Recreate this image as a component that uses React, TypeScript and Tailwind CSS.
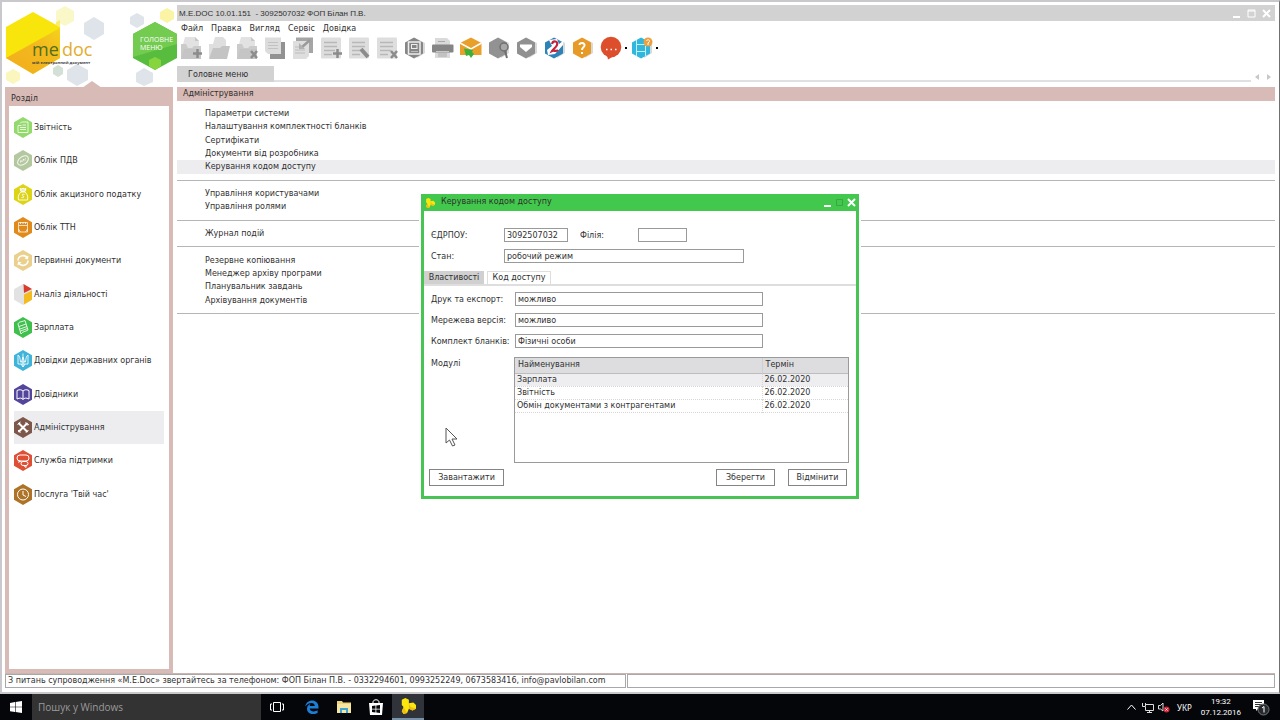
import { useState } from 'react'
import type { ReactNode } from 'react'

const HEX = 'M9 0L18 5.2V15.8L9 21L0 15.8V5.2Z'

interface HexProps {
  fill: string
  children?: ReactNode
}

function SectionHex({ fill, children }: HexProps) {
  return (
    <svg viewBox="0 0 18 21" className="h-[21px] w-[18px] shrink-0" fill="none" stroke="#fff" strokeWidth="1">
      <path d={HEX} fill={fill} stroke="none" />
      {children}
    </svg>
  )
}

const sections = [
  {
    label: 'Звітність',
    fill: '#93d96b',
    art: (
      <>
        <path d="M6 6.5L7.5 5H14V15.500H4V8.500" strokeOpacity=".8" />
        <path d="M4 8.500H7.500M6 10.500H12M6 12.500H12M8.500 8H12" strokeOpacity=".8" />
      </>
    ),
  },
  {
    label: 'Облік ПДВ',
    fill: '#b4c8a0',
    art: (
      <>
        <ellipse cx="9" cy="10.500" rx="6" ry="3.800" transform="rotate(-35 9 10.500)" strokeOpacity=".85" />
        <path d="M6.500 12.500L7 10.500L8.500 12M9 11L9.500 9L11 10.500M11 8.500L12 9" strokeOpacity=".85" />
      </>
    ),
  },
  {
    label: 'Облік акцизного податку',
    fill: '#dcd414',
    art: (
      <>
        <path d="M7 7.500L6 4.500L8 5L9 4L10 5L12 4.500L11 7.500Z" fill="#fff" fillOpacity=".6" />
        <path d="M7 8H11C14 11 14 13 13.500 16H4.500C4 13 4 11 7 8Z" strokeOpacity=".9" />
        <path d="M10.500 10.500C8 9.500 7.500 11.500 9 12S10 14 7.500 13.500" strokeOpacity=".9" />
      </>
    ),
  },
  {
    label: 'Облік ТТН',
    fill: '#e08a1c',
    art: (
      <>
        <path d="M4.500 8.500V5.500H13.500V8.500ZM4.500 8.500V15H13.500V8.500" strokeOpacity=".7" />
        <path d="M6.500 5V7M9 5V7M11.500 5V7M4.500 12L6.500 15M13.500 12L11.500 15" strokeOpacity=".7" />
      </>
    ),
  },
  {
    label: 'Первинні документи',
    fill: '#ebcf8c',
    art: (
      <>
        <path d="M4 10.500A5 5 0 0 1 13.500 8.500M14 10.500A5 5 0 0 1 4.500 12.500" strokeWidth="1.500" />
        <path d="M14.500 5.500L14 9.500L10.500 8.500ZM3.500 15.500L4 11.500L7.500 12.500Z" fill="#fff" stroke="none" />
      </>
    ),
  },
  {
    label: 'Аналіз діяльності',
    fill: '#e2e2e2',
    art: (
      <>
        <path d="M9.500 0L18 5L10 9Z" fill="#d83a30" stroke="none" />
        <path d="M10 10.500L18 6.500V15.800L10 20.500Z" fill="#f4bb20" stroke="none" />
      </>
    ),
  },
  {
    label: 'Зарплата',
    fill: '#3fc04c',
    art: (
      <path
        d="M4 7C5 4.500 6 5.500 11 3.500L14 13C11 15 9 14 7 17ZM5 9.500L12 7M6 12L13 9.500M6.500 14L13.500 11.500"
        strokeOpacity=".85"
      />
    ),
  },
  {
    label: 'Довідки державних органів',
    fill: '#3fb4da',
    art: (
      <path
        d="M4 5V14H14V5C12 6 12 9 11.500 12H6.500C6 9 6 6 4 5ZM9 3.500V17M7.500 12L9 7L10.500 12M7 14L9 17L11 14"
        strokeOpacity=".85"
      />
    ),
  },
  {
    label: 'Довідники',
    fill: '#54459c',
    art: <path d="M3 6.500C6 5 8 6 9 7C10 6 12 5 15 6.500V15C12 13.500 10 14 9 15.500C8 14 6 13.500 3 15ZM9 7V15.500" />,
  },
  {
    label: 'Адміністрування',
    fill: '#7d5749',
    art: (
      <>
        <path d="M4.500 6L13.500 15M13.500 6L4.500 15" strokeWidth="2" />
        <path d="M3.500 7.500L6.500 5M11.500 5.500L13 8L15 7.500M4 13L6.500 15.500M12 15.500L14.500 13" />
      </>
    ),
  },
  {
    label: 'Служба підтримки',
    fill: '#df4f36',
    art: (
      <>
        <rect x="3" y="5" width="12" height="6" rx="3" />
        <path d="M5 10.500L4 13L8 11" fill="#fff" stroke="none" />
        <rect x="7" y="11.500" width="7" height="4" rx="2" />
        <path d="M9 15L12 17.500L12 15" />
      </>
    ),
  },
  {
    label: "Послуга 'Твій час'",
    fill: '#ad7428',
    art: (
      <>
        <circle cx="9" cy="10.500" r="5.500" />
        <path d="M9 7V11L12 12.500" />
      </>
    ),
  },
]

const menu = ['Файл', 'Правка', 'Вигляд', 'Сервіс', 'Довідка']

// null is a separator line
const adminItems: (string | null)[] = [
  'Параметри системи',
  'Налаштування комплектності бланків',
  'Сертифікати',
  'Документи від розробника',
  'Керування кодом доступу',
  null,
  'Управління користувачами',
  'Управління ролями',
  null,
  'Журнал подій',
  null,
  'Резервне копіювання',
  'Менеджер архіву програми',
  'Планувальник завдань',
  'Архівування документів',
  null,
]

const modules = [
  { name: 'Зарплата', date: '26.02.2020' },
  { name: 'Звітність', date: '26.02.2020' },
  { name: 'Обмін документами з контрагентами', date: '26.02.2020' },
]

const folder = (
  <>
    <path d="M3 12L6 1H16L20 5V12Z" fill="#e2e2e2" />
    <path d="M16 1V5H20Z" fill="#c6c6c6" />
    <path d="M2 23V8H7L9 12H13L15 10H22V23Z" fill="#cbcbcb" />
    <path d="M2 23L5 13H22V23Z" fill="#c5c5c5" />
  </>
)

const sheet = (
  <>
    <rect x="2" y="1.500" width="20" height="21" rx="1" fill="#dedede" />
    <path d="M5 6.500H18M5 10.500H18M5 14.500H16M5 18.500H13" stroke="#b8b8b8" strokeWidth="1.500" />
  </>
)

const plus = <path d="M18.500 13V22M14 17.500H23" stroke="#8c8c8c" strokeWidth="2.500" />
const cross = <path d="M16 15L22 22M22 15L16 22" stroke="#8c8c8c" strokeWidth="2.500" />

function toolHex(fill: string) {
  return (
    <>
      <path d="M12 2L22 7V17L14 22Z" fill="#d9d9d9" />
      <path d="M11 1.500L20 6.500V17.500L11 22.500L2 17.500V6.500Z" fill={fill} />
    </>
  )
}

const tools = [
  { title: 'Створити', art: <>{folder}{plus}</> },
  {
    title: 'Відкрити',
    art: (
      <>
        <path d="M2 22V8H6L8 1H16L19 4V12L5 22Z" fill="#dedede" />
        <path d="M2 23L6 12H13L15 10H23L20 23Z" fill="#c4c4c4" />
      </>
    ),
  },
  { title: 'Видалити', art: <>{folder}{cross}</> },
  {
    title: 'Копіювати',
    art: (
      <>
        <path d="M7 6H22V23H7Z" fill="#929292" />
        <path d="M2 1.500H18V18H5L2 15Z" fill="#dcdcdc" />
        <path d="M5 6.500H15M5 9.500H15M5 12.500H15" stroke="#c2c2c2" />
      </>
    ),
  },
  {
    title: 'Вставити',
    art: (
      <>
        <path d="M5 1.500H22V17H5Z" fill="#a5a5a5" />
        <path d="M2 5H18V20L15 23H2Z" fill="#dedede" />
        <path d="M4 11H12M4 14H14M4 17H14" stroke="#bcbcbc" />
        <path d="M19 4L10 12" fill="none" stroke="#9a9a9a" strokeWidth="2.500" />
        <path d="M8 7V13H14Z" fill="#b0b0b0" />
      </>
    ),
  },
  { title: 'Додати рядок', art: <>{sheet}{plus}</> },
  {
    title: 'Редагувати рядок',
    art: <>{sheet}<path d="M14 13L21 21" stroke="#8c8c8c" strokeWidth="4" /></>,
  },
  { title: 'Видалити рядок', art: <>{sheet}{cross}</> },
  {
    title: 'Зберегти',
    art: (
      <>
        {toolHex('#868686')}
        <rect x="5.500" y="6" width="11.500" height="12" fill="none" stroke="#eee" strokeWidth="1.500" />
        <rect x="8.500" y="8.500" width="5.500" height="4" fill="none" stroke="#eee" />
        <path d="M8 15.500H15" stroke="#bbb" />
      </>
    ),
  },
  {
    title: 'Друк',
    art: (
      <>
        <path d="M4 2H16L19 5V22H4Z" fill="#dadada" />
        <path d="M7 5.500H14M7 18H16M7 20H16" stroke="#aaa" />
        <rect x="1" y="8.500" width="21.500" height="8" rx="1" fill="#858585" />
        <path d="M5 15.500H18" stroke="#c8c8c8" />
      </>
    ),
  },
  {
    title: 'Надіслати пошту',
    art: (
      <>
        <path d="M1 7L12 1.500L22.500 7V19H1Z" fill="#e8a02a" />
        <path d="M1 7L12 13L22.500 7" fill="none" stroke="#fff" strokeWidth="1.500" />
        <path d="M5 12.500L14 14L13 16L15 18L12 22L10 19L7 20Z" fill="#3bb13b" />
      </>
    ),
  },
  {
    title: 'Пошук',
    art: (
      <>
        {toolHex('#929292')}
        <circle cx="17" cy="11" r="4" fill="#a8a8a8" stroke="#707070" strokeWidth="1.500" />
        <path d="M18 15L20 22" stroke="#707070" strokeWidth="2" />
      </>
    ),
  },
  {
    title: 'Фільтр',
    art: <>{toolHex('#909090')}<path d="M5 8.500H17V11L11 16L5 11Z" fill="#fff" /></>,
  },
  {
    title: 'Перевірка',
    art: (
      <>
        {toolHex('#2b83b8')}
        <path d="M6 4L14 3L16 8L20 5V9L12 18L5 19L4 14L9 10Z" fill="#fff" />
        <path d="M9 8C10 4 15.500 5 14 9C13 12 10 13 9 15C11 14 13 16 15 14" fill="none" stroke="#c4213c" strokeWidth="2.200" />
      </>
    ),
  },
  {
    title: 'Довідка',
    art: (
      <>
        {toolHex('#e79a26')}
        <path d="M8.500 9C8.500 6 14 6.500 13.500 9.500C13 11.500 11 11.500 11 14M11 16V18" fill="none" stroke="#fff" strokeWidth="2" />
      </>
    ),
  },
  {
    title: 'Повідомлення',
    dot: true,
    art: (
      <>
        <circle cx="12" cy="11" r="10.300" fill="#dd4e2c" />
        <path d="M8 19L9 23.500L15 20Z" fill="#dd4e2c" />
        <path d="M7 13.500H8.500M11.500 13.500H13M16 13.500H17.500" stroke="#fff" strokeWidth="1.500" />
      </>
    ),
  },
  {
    title: 'Відео',
    dot: true,
    art: (
      <>
        {toolHex('#2fb7dc')}
        <path d="M6.500 4V20M15.500 4V20M7 8.500H15M7 15.500H15" stroke="#c5eef8" />
        <circle cx="18" cy="6" r="4.500" fill="#eda040" />
        <path d="M16.500 5C17 3 20 3.500 19.500 5.500L18 7V9" fill="none" stroke="#fff" />
      </>
    ),
  },
]

function MedocMark({ className }: { className: string }) {
  return (
    <svg viewBox="0 0 18 18" className={className}>
      <path d="M2 2L6 0L10 2V6L15 5L18 8V12L14 14L10 12L8 17L4 18L2 15L4 10L2 8Z" fill="#fbe60d" />
      <path d="M10 6V12L14 14L18 12L12 10ZM4 10L2 15L4 18L8 17Z" fill="#f0bd12" />
    </svg>
  )
}

function Brand() {
  return (
    <div className="relative h-[82px] w-[172px]">
      <svg viewBox="5 5 172 82" className="block h-[82px] w-[172px] overflow-visible">
        <defs>
          <linearGradient id="amber" x1="0" y1="1" x2="1" y2="0">
            <stop offset="0" stopColor="#f2ac1c" />
            <stop offset=".6" stopColor="#f3b91e" />
            <stop offset="1" stopColor="#f5d21c" />
          </linearGradient>
        </defs>
        <path d="M33 12L60 27V58L33 74L6 58V27Z" fill="#f8e50c" />
        <path d="M60 28V58L33 74L6 58Z" fill="url(#amber)" />
        <path d="M65 6L74 11V21L65 26L56 21V11Z" fill="#faf7c8" />
        <path d="M60 27V20L56 22V25Z" fill="#f9ee6c" />
        <path d="M94 17L104 23V34L94 40L84 34V23Z" fill="#dfe3ea" />
        <path d="M13 69L20 73V80L13 84L6 80V73Z" fill="#faf6bd" />
        <path d="M58 65L63 68V74L58 77L53 74V68Z" fill="#d3e0d5" />
        <path d="M77 64L88 70V80L77 86L67 80V70Z" fill="#dfe3ea" />
        <path d="M137 13L144 17V24L137 28L130 24V17Z" fill="#dfe3ea" />
        <path d="M167 8L174 12V19L167 23L160 19V12Z" fill="#faf4a4" />
        <path d="M144 68L153 73V82L144 86L136 82V73Z" fill="#dfe3ea" />
        <path d="M155 22L177 34V58L155 70L133 58V34Z" fill="#58bd3f" />
        <path d="M155 22L177 34V44L133 57V34Z" fill="#73cb50" />
        <path d="M155 57L161 60V66L155 70L149 66V60Z" fill="#86d53c" />
        <path d="M92 81L102 88H82Z" fill="#d8bab6" />
        <text x="32" y="56" fontSize="18" fontFamily="Open Sans" fill="#4f6f1c">me</text>
        <text x="62" y="56" fontSize="18" fontFamily="Open Sans" fill="#e3ad2c">doc</text>
        <text x="32" y="64" fontSize="4" fontFamily="Open Sans" fontWeight="700" fill="#444">мій електронний документ</text>
      </svg>
      <button className="absolute top-[17px] right-0 h-12 w-[45px] pb-1 pl-2 text-left font-['Open_Sans',sans-serif] text-[7px] leading-[8px] text-white">
        ГОЛОВНЕ МЕНЮ
      </button>
    </div>
  )
}

function Sidebar() {
  const [active, setActive] = useState(9)

  return (
    <aside className="flex w-[172px] shrink-0 flex-col">
      <Brand />
      <div className="flex w-[168px] flex-1 flex-col bg-[#d8bab6] px-1 pb-1">
        <h2 className="px-[2px] pt-[5px] leading-[14px]">Розділ</h2>
        <nav className="flex-1 bg-white px-[5px] pt-[5px]">
          <ul className="grid h-[400px] grid-rows-12">
            {sections.map((s, i) => (
              <li key={s.label} className={i === active ? 'bg-[#ededf0]' : ''}>
                <button onClick={() => setActive(i)} className="flex h-full w-full items-center gap-[2px] text-left whitespace-nowrap">
                  <SectionHex fill={s.fill}>{s.art}</SectionHex>
                  {s.label}
                </button>
              </li>
            ))}
          </ul>
        </nav>
      </div>
    </aside>
  )
}

function Toolbar() {
  return (
    <div className="flex h-[26px] items-center">
      {tools.map((t) => (
        <div key={t.title} className="flex items-center">
          <button title={t.title} className="flex w-7 justify-center">
            <svg viewBox="0 0 24 24" className="h-6 w-6">{t.art}</svg>
          </button>
          {t.dot && <span className="mr-px size-[2px] bg-black" />}
        </div>
      ))}
    </div>
  )
}

function Workspace() {
  return (
    <main className="flex min-w-0 flex-1 flex-col">
      <header className="flex h-4 items-center justify-between bg-[#d2d2d2] pr-1 pl-[2px]">
        <h1 className="font-['Liberation_Sans',sans-serif] whitespace-pre">
          M.E.DOC 10.01.151  - 3092507032 ФОП Білан П.В.
        </h1>
        <div className="flex gap-[6px] text-white">
          <button title="Згорнути">
            <svg viewBox="0 0 9 9" className="size-[9px]"><path d="M1 8H8" stroke="currentColor" strokeWidth="2" /></svg>
          </button>
          <button title="Розгорнути">
            <svg viewBox="0 0 9 9" className="size-[9px]"><path d="M1 1H8V8H1ZM1 2H8" fill="none" stroke="currentColor" /></svg>
          </button>
          <button title="Закрити">
            <svg viewBox="0 0 9 9" className="size-[9px]"><path d="M1 1L8 8M8 1L1 8" stroke="currentColor" strokeWidth="2" /></svg>
          </button>
        </div>
      </header>
      <nav className="flex h-[14px] items-center gap-2 px-1">
        {menu.map((m) => (
          <button key={m}>{m}</button>
        ))}
      </nav>
      <Toolbar />
      <div className="mt-[5px] flex h-4 items-end">
        <button className="h-full w-[97px] bg-[#d2d2d2] pt-px pl-[11px] text-left">Головне меню</button>
        <div className="h-[2px] flex-1 bg-[#dfe0e2]" />
        <div className="flex h-full w-6 items-center justify-around pt-[5px] text-[#c8c8c8]">
          <button title="Назад">
            <svg viewBox="0 0 4 6" className="h-[6px] w-1"><path d="M4 0V6L0 3Z" fill="currentColor" /></svg>
          </button>
          <button title="Вперед">
            <svg viewBox="0 0 4 6" className="h-[6px] w-1"><path d="M0 0V6L4 3Z" fill="currentColor" /></svg>
          </button>
        </div>
      </div>
      <h2 className="mt-[5px] h-[14px] bg-[#d8bab6] pl-[6px] leading-[14px]">Адміністрування</h2>
      <ul className="mt-[6px] grid h-[213px] grid-rows-16">
        {adminItems.map((item, i) =>
          item === null ? (
            <li key={i} className="flex items-center"><hr className="w-full border-[#b5b5b5]" /></li>
          ) : (
            <li key={i} className={`flex items-center pl-7 ${i === 4 ? 'bg-[#ededf0]' : ''}`}>
              <a href="#">{item}</a>
            </li>
          )
        )}
      </ul>
    </main>
  )
}

const inputStyle = 'h-[14px] border border-[#9a9a9a] bg-white px-[2px] text-[8px] outline-none'

const props = [
  { id: 'print', label: 'Друк та експорт:', value: 'можливо' },
  { id: 'network', label: 'Мережева версія:', value: 'можливо' },
  { id: 'forms', label: 'Комплект бланків:', value: 'Фізичні особи' },
]

function AccessDialog() {
  return (
    <section className="absolute inset-x-0 top-[194px] mx-auto w-[438px] border-3 border-t-0 border-[#48c455] bg-white ring-2 ring-white">
      <header className="flex h-[17px] items-center bg-[#42c84c] pl-[1px]">
        <MedocMark className="h-[10px] w-[10px]" />
        <h2 className="flex-1 pb-[2px] pl-[6px]">Керування кодом доступу</h2>
        <div className="flex items-center gap-[3px]">
          <button title="Згорнути">
            <svg viewBox="0 0 9 9" className="size-[9px]"><path d="M1 8H8" stroke="#fff" strokeWidth="2" /></svg>
          </button>
          <button title="Розгорнути" disabled>
            <svg viewBox="0 0 9 9" className="size-[9px]"><path d="M1.500 1.500H7.500V7.500H1.500Z" fill="none" stroke="#3aa544" /></svg>
          </button>
          <button title="Закрити">
            <svg viewBox="0 0 9 9" className="size-[9px]"><path d="M1 1L8 8M8 1L1 8" stroke="#fff" strokeWidth="2" /></svg>
          </button>
        </div>
      </header>

      <div className="flex flex-col gap-[7px] px-[7px] pt-[17px]">
        <div className="flex items-center">
          <label htmlFor="edrpou" className="w-[73px]">ЄДРПОУ:</label>
          <input id="edrpou" defaultValue="3092507032" className={`${inputStyle} w-16`} />
          <label htmlFor="branch" className="w-[70px] pl-3">Філія:</label>
          <input id="branch" className={`${inputStyle} w-[49px]`} />
        </div>
        <div className="flex items-center">
          <label htmlFor="state" className="w-[73px]">Стан:</label>
          <input id="state" defaultValue="робочий режим" className={`${inputStyle} w-[240px]`} />
        </div>
      </div>

      <div className="mt-2 flex items-end gap-[3px] border-b-2 border-[#dedede]">
        <button className="h-[13px] w-[60px] bg-[#d0d0d0] pt-px leading-3">Властивості</button>
        <button className="h-[13px] w-16 border border-b-0 border-[#dedede] leading-3">Код доступу</button>
      </div>

      <div className="flex flex-col gap-[7px] px-[7px] pt-[6px]">
        {props.map((p) => (
          <div key={p.id} className="flex items-center">
            <label htmlFor={p.id} className="w-[84px] whitespace-nowrap">{p.label}</label>
            <input id={p.id} defaultValue={p.value} className={`${inputStyle} w-[248px]`} />
          </div>
        ))}
        <div className="flex pt-[2px]">
          <span className="w-[84px]">Модулі</span>
          <div className="h-[106px] w-[335px] shrink-0 border border-[#9a9a9a]">
            <table className="w-full table-fixed border-collapse text-left leading-3">
              <thead>
                <tr className="h-[15px] border-b border-[#bdbdbd] bg-[#dddddf]">
                  <th className="border-r border-[#cfcfcf] pl-[3px] font-normal">Найменування</th>
                  <th className="w-[86px] pl-[3px] font-normal">Термін</th>
                </tr>
              </thead>
              <tbody>
                {modules.map((m, i) => (
                  <tr key={m.name} className={`h-[13px] border-b border-dotted border-[#d6d6d6] ${i === 0 ? 'bg-[#eeeef1]' : ''}`}>
                    <td className="border-r border-dotted border-[#d6d6d6] pl-[2px]">{m.name}</td>
                    <td className="pl-[2px]">{m.date}</td>
                  </tr>
                ))}
              </tbody>
            </table>
          </div>
        </div>
      </div>

      <footer className="flex gap-[13px] px-[5px] pt-[6px] pb-[10px]">
        <button className="mr-auto h-[17px] w-[75px] border border-[#858585]">Завантажити</button>
        <button className="h-[17px] w-[59px] border border-[#858585]">Зберегти</button>
        <button className="mr-1 h-[17px] w-[59px] border border-[#858585]">Відмінити</button>
      </footer>
    </section>
  )
}

function Taskbar() {
  return (
    <footer className="flex h-[26px] shrink-0 items-center bg-[#04060a] font-['Open_Sans',sans-serif] text-white">
      <button title="Пуск" className="flex w-8 justify-center">
        <svg viewBox="0 0 12 12" className="size-3" fill="#fff">
          <path d="M0 2L5 1V5.700H0ZM5.600 .9L12 0V5.700H5.600ZM0 6.300H5V11L0 10.200ZM5.600 6.300H12V12L5.600 11.100Z" />
        </svg>
      </button>
      <input
        aria-label="Пошук у Windows"
        placeholder="Пошук у Windows"
        className="h-full w-[229px] bg-[#333333] px-[6px] text-[10px] outline-none placeholder:text-[#9a9a9a]"
      />
      <button title="Подання завдань" className="flex w-8 justify-center">
        <svg viewBox="0 0 14 12" className="h-3 w-[14px]" fill="none" stroke="#fff">
          <path d="M3.500 1.500H10.500V10.500H3.500ZM2 3H.5V9H2M12 3H13.500V9H12" />
        </svg>
      </button>
      <button title="Edge" className="ml-[3px] flex w-8 justify-center">
        <svg viewBox="0 0 14 14" className="size-[14px]">
          <path d="M.3 6.500C1-1.500 13.500-2 13.500 7V8.500H4.700C5 12 10 12 12.600 10.300V13C8 15.500 1.500 14 2 8.500C2 6 4 4.500 5.500 4C4.800 5 4.700 6 4.700 6H9.800C9.800 2 3.500 2 .3 6.500Z" fill="#1b7fd6" />
        </svg>
      </button>
      <button title="Провідник" className="flex w-8 justify-center">
        <svg viewBox="0 0 16 14" className="h-[14px] w-4">
          <path d="M1 1H6L7 2.500H15V13H1Z" fill="#efd37a" />
          <path d="M1 4H15V13H1Z" fill="#f8e6a0" />
          <path d="M4 13V8H12V13H10V10H6V13Z" fill="#3da6d6" />
        </svg>
      </button>
      <button title="Магазин" className="flex w-8 justify-center">
        <svg viewBox="0 0 16 16" className="size-4">
          <path d="M1 4H15L14 16H2Z" fill="#fff" />
          <path d="M5 6V3C5 0 11 0 11 3V6" fill="none" stroke="#fff" />
          <path d="M4 7L7.500 6.500V9.700H4ZM8.300 6.400L12 6V9.700H8.300ZM4 10.400H7.500V13.500L4 13ZM8.300 10.400H12V14L8.300 13.600Z" fill="#04060a" />
        </svg>
      </button>
      <button title="M.E.Doc" className="flex h-full w-8 items-center justify-center border-b-2 border-[#7691a8] bg-[#30343a]">
        <MedocMark className="size-4" />
      </button>

      <div className="ml-auto flex items-center text-[8px] leading-[11px]">
        <svg viewBox="0 0 9 6" className="h-[6px] w-[9px]" fill="none" stroke="#fff"><path d="M.5 5.500L4.500 1L8.500 5.500" /></svg>
        <svg viewBox="0 0 12 11" className="ml-[6px] h-[11px] w-3" fill="none" stroke="#ddd">
          <path d="M4 2.500H11.500V8.500H3.500V5M.5 1V4.500H3.500V1M5 10.500H10M7.500 8.500V10" />
        </svg>
        <svg viewBox="0 0 12 11" className="ml-1 h-[11px] w-3" fill="none" stroke="#ddd">
          <path d="M5 1V9L2.500 7H.5V3.500H2.500Z" />
          <circle cx="8.500" cy="7.500" r="3" fill="#d4263a" stroke="none" />
          <path d="M7.500 6.500L9.500 8.500M9.500 6.500L7.500 8.500" stroke="#fff" />
        </svg>
        <button className="ml-[7px] font-['Noto_Sans',sans-serif]">УКР</button>
        <time className="ml-[9px] text-center font-['Roboto',sans-serif]">19:32<br />07.12.2016</time>
        <button title="Центр сповіщень" className="mr-[10px] ml-[11px]">
          <svg viewBox="0 0 18 18" className="h-[18px] w-[18px]">
            <path d="M1 2H12V11H6L4 13V11H1Z" fill="#fff" />
            <path d="M3 4.500H10M3 6.500H10M3 8.500H8" stroke="#333" />
            <circle cx="11.500" cy="11.500" r="5.500" fill="#26292e" stroke="#777" />
            <path d="M10 10L12 8.500V14.500" fill="none" stroke="#fff" />
          </svg>
        </button>
      </div>
    </footer>
  )
}

export default function App() {
  return (
    <div className="relative flex min-h-screen flex-col font-['DejaVu_Sans',sans-serif] text-[8px] leading-[13px] text-[#303030]">
      <div className="flex flex-1 flex-col border-t-2 border-r border-b-2 border-l-2 border-[#c9c9cd] border-r-[#707070] bg-white pt-[3px] pr-1 pb-1 pl-[3px]">
        <div className="flex flex-1">
          <Sidebar />
          <Workspace />
        </div>
        <div className="flex h-[15px] gap-px border-t border-[#c9b5b2]">
          <p className="min-w-[621px] border border-[#a8a8a8] px-[2px] leading-3 whitespace-nowrap">
            З питань супроводження «M.E.Doc» звертайтесь за телефоном: ФОП Білан П.В. - 0332294601, 0993252249, 0673583416, info@pavlobilan.com
          </p>
          <div className="flex-1 border border-[#a8a8a8]" />
        </div>
      </div>
      <Taskbar />
      <AccessDialog />
      <svg viewBox="0 0 13 20" className="pointer-events-none absolute top-[427px] left-[445px] h-5 w-[13px]">
        <path d="M1 1V16L4.500 13L7.500 19L10 18L7 12H12Z" fill="#fff" stroke="#555" />
      </svg>
    </div>
  )
}
